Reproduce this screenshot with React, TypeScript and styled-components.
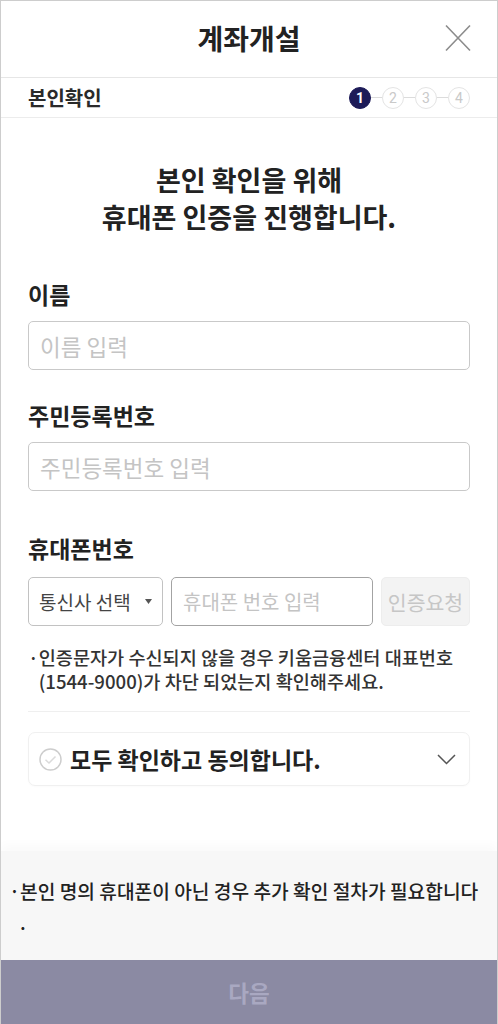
import React from "react";
import styled, { createGlobalStyle } from "styled-components";

const GlobalStyle = createGlobalStyle`
  html, body { margin: 0; padding: 0; background: #fff; }
  body { font-family: "Noto Sans CJK KR", "Noto Sans", sans-serif; color: #222; }
  * { box-sizing: border-box; }
`;

const Frame = styled.div`
  width: 498px;
  height: 1024px;
  display: flex;
  flex-direction: column;
  border: 1px solid #cdcdcd;
  border-bottom: none;
  background: #fff;
  overflow: hidden;
`;

const Header = styled.header`
  height: 77px;
  display: grid;
  grid-template-columns: 1fr auto 1fr;
  align-items: center;
  border-bottom: 1px solid #e6e6e6;
  padding: 0 26px 2px;
`;

const Title = styled.h1`
  grid-column: 2;
  margin: 0;
  font-size: 28px;
  font-weight: 700;
  line-height: 36px;
  color: #222;
`;

const CloseButton = styled.button`
  grid-column: 3;
  justify-self: end;
  width: 26px;
  height: 28px;
  padding: 0;
  border: none;
  background: none;
  display: flex;
  align-items: center;
  justify-content: center;
`;

const StepBar = styled.div`
  height: 40px;
  display: flex;
  align-items: center;
  justify-content: space-between;
  padding: 0 27px 0 27px;
  border-bottom: 1px solid #ececec;
`;

const StepTitle = styled.span`
  font-size: 20px;
  font-weight: 700;
  line-height: 26px;
  color: #2a2a2a;
`;

const Steps = styled.div`
  display: flex;
  align-items: center;
`;

const StepDot = styled.span<{ $active?: boolean }>`
  width: 22px;
  height: 22px;
  border-radius: 50%;
  display: flex;
  align-items: center;
  justify-content: center;
  font-family: "Roboto", "Noto Sans", sans-serif;
  font-size: 14px;
  font-weight: ${(p) => (p.$active ? 700 : 400)};
  color: ${(p) => (p.$active ? "#fff" : "#c9c9c9")};
  background: ${(p) => (p.$active ? "#1d1b58" : "#fff")};
  border: 1px solid ${(p) => (p.$active ? "#1d1b58" : "#e4e4e4")};
`;

const StepLine = styled.span`
  width: 11px;
  height: 1px;
  background: #dcdcdc;
`;

const Content = styled.main`
  flex: 1;
  padding: 43px 27px 0;
  display: flex;
  flex-direction: column;
`;

const Headline = styled.h2`
  margin: 0;
  text-align: center;
  font-size: 27px;
  font-weight: 700;
  line-height: 37px;
  color: #222;
`;

const Label = styled.div<{ $gap: number }>`
  margin-top: ${(p) => p.$gap}px;
  font-size: 23px;
  font-weight: 700;
  line-height: 28px;
  color: #222;
`;

const TextInput = styled.input<{ $strong?: boolean; $size?: number }>`
  display: block;
  width: 100%;
  height: 49px;
  margin: 0;
  border: 1px solid ${(p) => (p.$strong ? "#a3a3a3" : "#c9c9c9")};
  border-radius: 5px;
  padding: 0 11px;
  font-family: "Noto Sans CJK KR", "Noto Sans", sans-serif;
  font-size: ${(p) => p.$size ?? 22.5}px;
  color: #222;
  background: #fff;
  outline: none;
  &::placeholder { color: #c4c4c4; }
`;

const InputWrap = styled.div`
  margin-top: 13px;
`;

const PhoneRow = styled.div`
  margin-top: 15px;
  display: grid;
  grid-template-columns: 135px 1fr 89px;
  column-gap: 8px;
`;

const SelectBox = styled.div`
  height: 49px;
  border: 1px solid #c2c2c2;
  border-radius: 5px;
  display: flex;
  align-items: center;
  justify-content: space-between;
  padding: 0 10px 0 10px;
  font-size: 19px;
  color: #444;
`;

const RequestButton = styled.button`
  height: 49px;
  border: 1px solid #ededed;
  border-radius: 5px;
  background: #f3f3f3;
  color: #c6c6c6;
  font-family: "Noto Sans CJK KR", "Noto Sans", sans-serif;
  font-size: 20.5px;
  padding: 0;
`;

const Note = styled.div`
  margin-top: 19px;
  display: flex;
  font-size: 18.6px;
  font-weight: 500;
  line-height: 24px;
  color: #333;
  white-space: nowrap;
`;

const NoteLines = styled.div`
  display: flex;
  flex-direction: column;
`;

const Bullet = styled.span<{ $w: number }>`
  flex: 0 0 ${(p) => p.$w}px;
`;

const Divider = styled.hr`
  margin: 18px 0 0;
  border: none;
  height: 1px;
  background: #efefef;
`;

const AgreeBox = styled.div`
  margin-top: 20px;
  height: 54px;
  border: 1px solid #f0f0f0;
  border-radius: 7px;
  display: flex;
  align-items: center;
  padding: 0 13px 0 10px;
  box-shadow: 0 1px 2px rgba(0, 0, 0, 0.02);
`;

const AgreeText = styled.span`
  flex: 1;
  margin-left: 8px;
  font-size: 23px;
  font-weight: 700;
  line-height: 28px;
  color: #222;
  white-space: nowrap;
`;

const Notice = styled.div`
  padding: 25px 12px 22px 8px;
  background: #f7f7f7;
  box-shadow: 0 -6px 10px rgba(0, 0, 0, 0.025);
  display: flex;
  font-size: 19.2px;
  font-weight: 500;
  line-height: 31px;
  color: #222;
  white-space: nowrap;
`;

const NextButton = styled.button`
  height: 64px;
  flex: 0 0 64px;
  border: none;
  background: #8b8aa3;
  color: #a9a8c1;
  font-family: "Noto Sans CJK KR", "Noto Sans", sans-serif;
  font-size: 22.5px;
  font-weight: 700;
  padding: 0;
`;

const CloseIcon = () => (
  <svg width="26" height="28" viewBox="0 0 26 28">
    <path d="M1 1.5 L25 26.5 M25 1.5 L1 26.5" stroke="#8c8c8c" strokeWidth="1.6" fill="none" />
  </svg>
);

const Caret = () => (
  <svg width="7" height="5" viewBox="0 0 7 5">
    <path d="M0 0 H7 L3.5 5 Z" fill="#555" />
  </svg>
);

const CheckCircle = () => (
  <svg width="23" height="23" viewBox="0 0 23 23">
    <circle cx="11.5" cy="11.5" r="10.5" stroke="#cdcdcd" strokeWidth="1.5" fill="#fff" />
    <path d="M6.5 11.8 L10 15 L16.5 8.5" stroke="#dadada" strokeWidth="1.5" fill="none" />
  </svg>
);

const Chevron = () => (
  <svg width="19" height="11" viewBox="0 0 19 11">
    <path d="M1 1 L9.5 9.5 L18 1" stroke="#555" strokeWidth="1.5" fill="none" />
  </svg>
);

export default function App() {
  const steps = [1, 2, 3, 4];
  return (
    <>
      <GlobalStyle />
      <Frame>
        <Header>
          <Title>계좌개설</Title>
          <CloseButton aria-label="닫기">
            <CloseIcon />
          </CloseButton>
        </Header>
        <StepBar>
          <StepTitle>본인확인</StepTitle>
          <Steps>
            {steps.map((s, i) => (
              <React.Fragment key={s}>
                {i > 0 && <StepLine />}
                <StepDot $active={s === 1}>{s}</StepDot>
              </React.Fragment>
            ))}
          </Steps>
        </StepBar>
        <Content>
          <Headline>
            본인 확인을 위해
            <br />
            휴대폰 인증을 진행합니다.
          </Headline>

          <Label $gap={45}>이름</Label>
          <InputWrap>
            <TextInput placeholder="이름 입력" />
          </InputWrap>

          <Label $gap={31}>주민등록번호</Label>
          <InputWrap>
            <TextInput placeholder="주민등록번호 입력" />
          </InputWrap>

          <Label $gap={43}>휴대폰번호</Label>
          <PhoneRow>
            <SelectBox>
              <span>통신사 선택</span>
              <Caret />
            </SelectBox>
            <TextInput $strong $size={20} placeholder="휴대폰 번호 입력" />
            <RequestButton>인증요청</RequestButton>
          </PhoneRow>

          <Note>
            <Bullet $w={9}>·</Bullet>
            <NoteLines>
              <span>인증문자가 수신되지 않을 경우 키움금융센터 대표번호</span>
              <span>(1544-9000)가 차단 되었는지 확인해주세요.</span>
            </NoteLines>
          </Note>

          <Divider />

          <AgreeBox>
            <CheckCircle />
            <AgreeText>모두 확인하고 동의합니다.</AgreeText>
            <Chevron />
          </AgreeBox>
        </Content>
        <Notice>
          <Bullet $w={10}>·</Bullet>
          <span>
            본인 명의 휴대폰이 아닌 경우 추가 확인 절차가 필요합니다
            <br />.
          </span>
        </Notice>
        <NextButton>다음</NextButton>
      </Frame>
    </>
  );
}
